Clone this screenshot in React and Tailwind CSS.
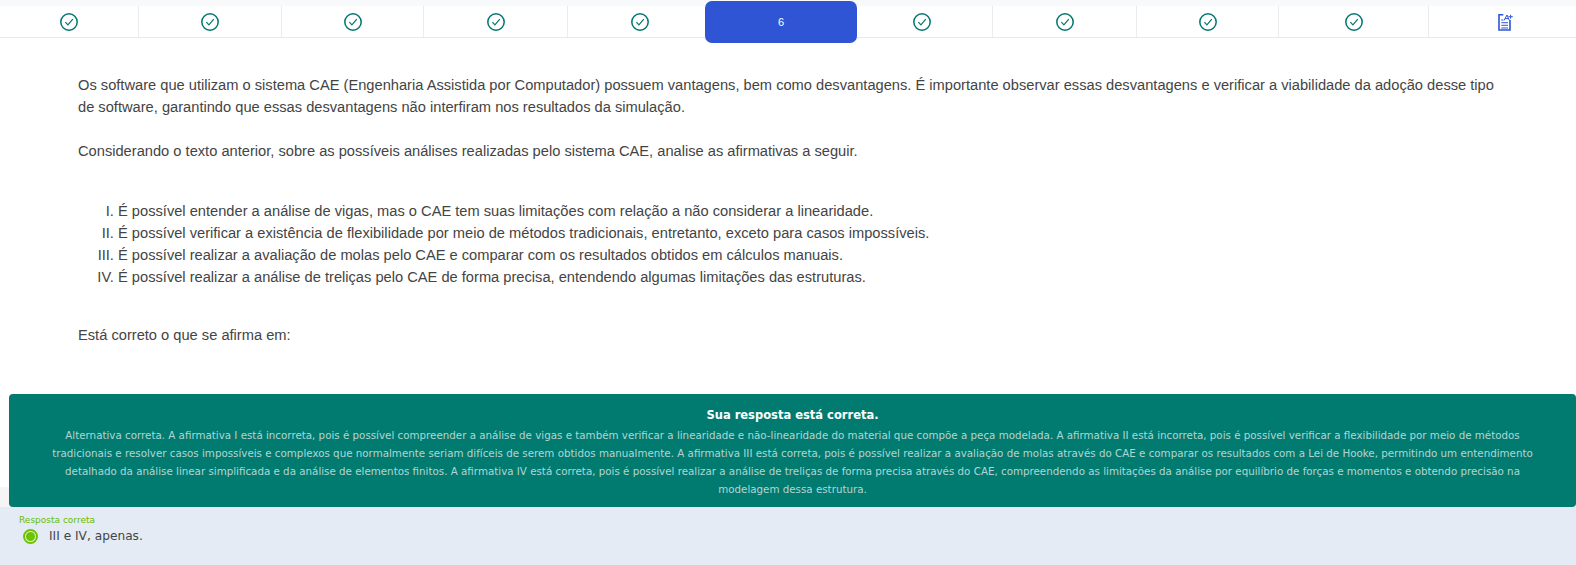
const tabs = [
  { w: "w-[139px]", border: true },
  { w: "w-[143px]", border: true },
  { w: "w-[142px]", border: true },
  { w: "w-[144px]", border: true },
  { w: "w-[143px]", border: false },
  { w: "w-[140px]", current: true },
  { w: "w-[142px]", border: true },
  { w: "w-[144px]", border: true },
  { w: "w-[142px]", border: true },
  { w: "w-[150px]", border: true },
  { w: "w-[147px]", last: true },
];

function CheckIcon() {
  return (
    <svg width="18" height="18" viewBox="0 0 18 18" fill="none" stroke="#02776e">
      <circle cx="9" cy="9" r="8.2" strokeWidth="1.5" />
      <path d="M5.4 9.2l2.5 2.6 4.9-5.6" strokeWidth="1.2" />
    </svg>
  );
}

function NotesIcon() {
  return (
    <svg width="15" height="17" viewBox="0 0 15 17" fill="none" stroke="#2f55d4" className="ml-[6px] mt-[2px]">
      <path d="M5.3 .7H1v15.3h11V6" strokeWidth="1.6" />
      <path d="M3.3 8.7H10M3.3 11.3H10M3.3 14H10" strokeWidth="1" />
      <path d="M3.3 6h2M6 6.5 9 1l2.4 5.5M7 4.6h3.6" strokeWidth="1" />
      <path d="M10.5 2.7h4.3M12.6 .7v4" strokeWidth="1" />
    </svg>
  );
}

function App() {
  return (
    <div className="relative flex h-[565px] w-[1576px] flex-col overflow-hidden bg-white font-['Liberation_Sans',sans-serif] text-[14.66px] leading-[22px] text-[#444]">
      <div className="h-[6px] bg-[#f8f9fb]"></div>
      <div className="flex h-[32px] border-b border-[#e9e9eb]">
        {tabs.map((tab, index) =>
          tab.current ? (
            <div key={index} className={`${tab.w} relative z-10 -mx-[6px] -mt-[5px] box-content flex h-[42px] items-center justify-center rounded-[7px] bg-[#2f55d4] px-[6px] text-[11px] text-white`}>
              6
            </div>
          ) : (
            <div key={index} className={`${tab.w} flex h-[31px] items-center justify-center ${tab.border ? "border-r border-[#e9ebee]" : ""}`}>
              {tab.last ? <NotesIcon /> : <CheckIcon />}
            </div>
          )
        )}
      </div>

      <div className="flex-1 px-[78px] pt-[36px]">
        <p>Os software que utilizam o sistema CAE (Engenharia Assistida por Computador) possuem vantagens, bem como desvantagens. É importante observar essas desvantagens e verificar a viabilidade da adoção desse tipo de software, garantindo que essas desvantagens não interfiram nos resultados da simulação.</p>
        <p className="mt-[22px]">Considerando o texto anterior, sobre as possíveis análises realizadas pelo sistema CAE, analise as afirmativas a seguir.</p>
        <ol className="mt-[38px] list-[upper-roman] pl-[40px]">
          <li>É possível entender a análise de vigas, mas o CAE tem suas limitações com relação a não considerar a linearidade.</li>
          <li>É possível verificar a existência de flexibilidade por meio de métodos tradicionais, entretanto, exceto para casos impossíveis.</li>
          <li>É possível realizar a avaliação de molas pelo CAE e comparar com os resultados obtidos em cálculos manuais.</li>
          <li>É possível realizar a análise de treliças pelo CAE de forma precisa, entendendo algumas limitações das estruturas.</li>
        </ol>
        <p className="mt-[36px]">Está correto o que se afirma em:</p>
      </div>

      <div className="bg-[linear-gradient(to_bottom,#ffffff_93px,#f5f5f5_93px)] pl-[9px]">
        <div className="rounded-[4px] bg-[#017a70] px-[30px] pb-[9px] pt-[12px] text-center font-['DejaVu_Sans',sans-serif] text-[10.3px] leading-[18px] text-white/70">
          <p className="text-[11.5px] font-bold text-white">Sua resposta está correta.</p>
          <p className="mt-[2px]">Alternativa correta. A afirmativa I está incorreta, pois é possível compreender a análise de vigas e também verificar a linearidade e não-linearidade do material que compõe a peça modelada. A afirmativa II está incorreta, pois é possível verificar a flexibilidade por meio de métodos tradicionais e resolver casos impossíveis e complexos que normalmente seriam difíceis de serem obtidos manualmente. A afirmativa III está correta, pois é possível realizar a avaliação de molas através do CAE e comparar os resultados com a Lei de Hooke, permitindo um entendimento detalhado da análise linear simplificada e da análise de elementos finitos. A afirmativa IV está correta, pois é possível realizar a análise de treliças de forma precisa através do CAE, compreendendo as limitações da análise por equilíbrio de forças e momentos e obtendo precisão na modelagem dessa estrutura.</p>
        </div>
      </div>

      <div className="h-[58px] bg-[#e4ebf4] pl-[19px] pt-[7px] font-['DejaVu_Sans',sans-serif]">
        <div className="text-[9px] leading-[12px] text-[#68bd00]">Resposta correta</div>
        <div className="mt-[2px] flex items-center gap-[11px] pl-[4px] text-[12.2px] leading-[16px] text-[#444]">
          <span className="flex h-[15px] w-[15px] items-center justify-center rounded-full border-[2px] border-[#6cc400]">
            <span className="h-[9px] w-[9px] rounded-full bg-[#6cc400]"></span>
          </span>
          III e IV, apenas.
        </div>
      </div>
    </div>
  );
}

export default App;
